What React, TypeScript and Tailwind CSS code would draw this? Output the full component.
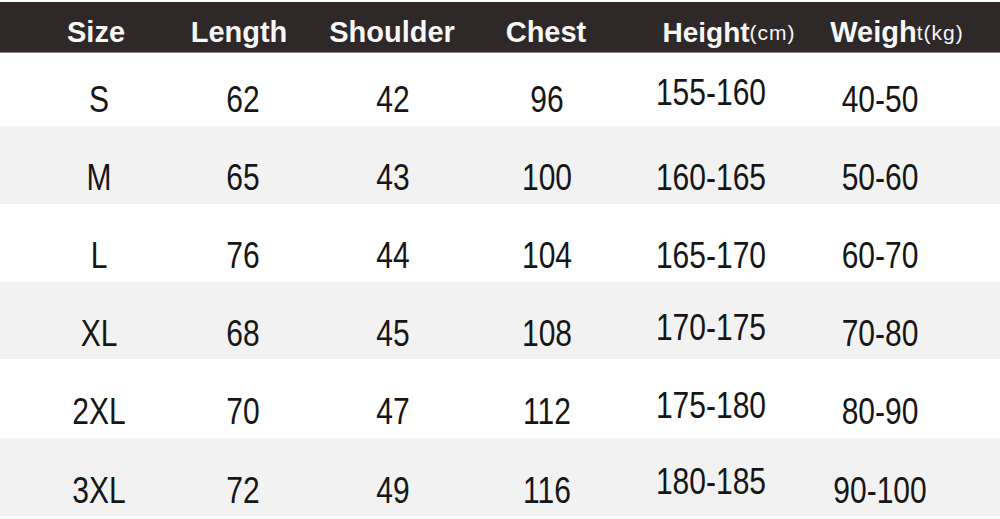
const rows = [
  { size: 'S', length: '62', shoulder: '42', chest: '96', height: '155-160', weight: '40-50', bg: 'bg-white', h: 'h-[73px] pt-[18px]', lift: '-translate-y-[7px]' },
  { size: 'M', length: '65', shoulder: '43', chest: '100', height: '160-165', weight: '50-60', bg: 'bg-[#f2f2f2]', h: 'h-[78px] pt-[24px]', lift: '' },
  { size: 'L', length: '76', shoulder: '44', chest: '104', height: '165-170', weight: '60-70', bg: 'bg-white', h: 'h-[78px] pt-[24px]', lift: '' },
  { size: 'XL', length: '68', shoulder: '45', chest: '108', height: '170-175', weight: '70-80', bg: 'bg-[#f2f2f2]', h: 'h-[77px] pt-[25px]', lift: '-translate-y-[6px]' },
  { size: '2XL', length: '70', shoulder: '47', chest: '112', height: '175-180', weight: '80-90', bg: 'bg-white', h: 'h-[79px] pt-[25px]', lift: '-translate-y-[6px]' },
  { size: '3XL', length: '72', shoulder: '49', chest: '116', height: '180-185', weight: '90-100', bg: 'bg-[#f2f2f2]', h: 'h-[78px] pt-[26px]', lift: '-translate-y-[9px]' },
];

const cols = 'grid grid-cols-[198px_90px_210px_98px_230px_108px_1fr]';

const Cell = ({ children, className = '' }: { children: React.ReactNode; className?: string }) => (
  <div className={`flex items-center justify-center whitespace-nowrap ${className}`}>{children}</div>
);

const Num = ({ v }: { v: string }) => (
  <span className="inline-block scale-y-[1.25] leading-none">{v}</span>
);

export default function App() {
  return (
    <div className="w-[1000px] h-[519px] bg-white pt-[2px] overflow-hidden font-['Liberation_Sans',Arial,sans-serif]">
      <div className={`${cols} h-[50px] bg-[#2e2829] text-[#f7f7f7] font-bold text-[29px] pt-[9px]`}>
        <Cell className="-translate-x-[3px]">Size</Cell>
        <Cell className="-translate-x-[4px]">Length</Cell>
        <Cell className="-translate-x-[1px]">Shoulder</Cell>
        <Cell className="-translate-x-[1px]">Chest</Cell>
        <Cell className="translate-x-[18px] items-baseline">
          <span className="text-[28px]">Height</span>
          <span className="text-[21px] font-normal tracking-[1px]">(cm)</span>
        </Cell>
        <Cell className="translate-x-[17px] items-baseline">
          <span>Weigh</span>
          <span className="text-[21px] font-normal tracking-[1px]">t(kg)</span>
        </Cell>
        <div />
      </div>
      <div className="h-px bg-[#8c8c8c]" />
      {rows.map((r) => (
        <div key={r.size} className={`${cols} ${r.bg} ${r.h} text-[30px] text-[#161616] items-center`}>
          <Cell><Num v={r.size} /></Cell>
          <Cell><Num v={r.length} /></Cell>
          <Cell><Num v={r.shoulder} /></Cell>
          <Cell><Num v={r.chest} /></Cell>
          <Cell className={r.lift}><Num v={r.height} /></Cell>
          <Cell><Num v={r.weight} /></Cell>
          <div />
        </div>
      ))}
    </div>
  );
}
